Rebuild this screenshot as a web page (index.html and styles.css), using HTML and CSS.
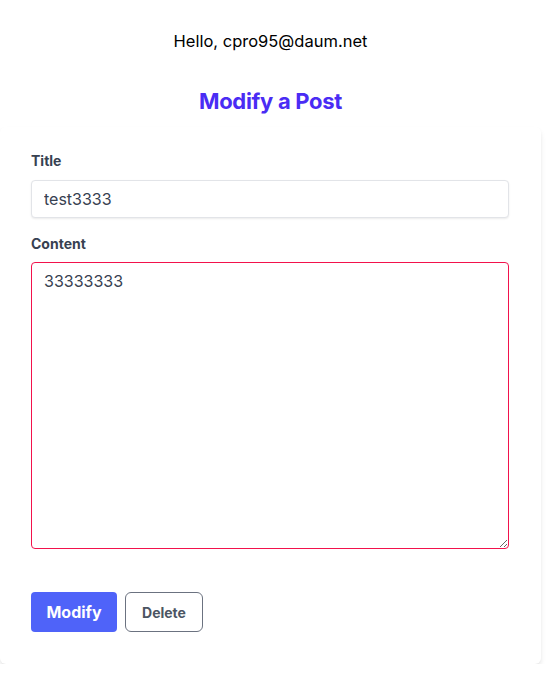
FILE: index.html
```html
<!DOCTYPE html>
<html>
<head>
<meta charset="utf-8">
<link rel="stylesheet" href="styles.css">
</head>
<body>
<div class="page">
  <p class="hello">Hello, cpro95@daum.net</p>
  <h1 class="heading">Modify a Post</h1>
  <form class="card">
    <label class="label" for="title">Title</label>
    <input id="title" class="input" type="text" value="test3333">
    <label class="label label-content" for="content">Content</label>
    <textarea id="content" class="textarea">33333333</textarea>
    <div class="actions">
      <button type="button" class="btn btn-primary">Modify</button>
      <button type="button" class="btn btn-outline">Delete</button>
    </div>
  </form>
</div>
</body>
</html>
```
FILE: styles.css
```css
html, body {
  margin: 0;
  padding: 0;
  background: #ffffff;
}
body {
  font-family: Inter, "Noto Sans", sans-serif;
  color: #000;
}
.page {
  width: 541px;
  display: flex;
  flex-direction: column;
}
.hello {
  margin: 31px 0 0;
  font-size: 16.5px;
  line-height: 20px;
  text-align: center;
  color: #000;
}
.heading {
  margin: 36px 0 0;
  font-size: 22px;
  line-height: 28px;
  font-weight: 700;
  text-align: center;
  color: #4a2cf4;
  letter-spacing: -0.3px;
}
.card {
  margin-top: 12px;
  background: #fff;
  border-radius: 6px;
  box-shadow: 0 4px 6px -1px rgba(0,0,0,0.1), 0 2px 4px -1px rgba(0,0,0,0.06);
  padding: 24px 32px 32px 31px;
  display: flex;
  flex-direction: column;
}
.label {
  font-size: 14px;
  line-height: 20px;
  font-weight: 700;
  color: #374151;
  margin-bottom: 9px;
}
.label-content {
  margin-top: 16px;
  margin-bottom: 8px;
}
.input {
  box-sizing: border-box;
  height: 38px;
  width: 100%;
  border: 1px solid #e2e4e8;
  border-radius: 4px;
  box-shadow: 0 1px 2px rgba(0,0,0,0.08);
  padding: 0 12px;
  font-family: inherit;
  font-size: 16px;
  color: #374151;
  outline: none;
}
.textarea {
  box-sizing: border-box;
  height: 287px;
  width: 100%;
  border: 1px solid #f2124c;
  border-radius: 4px;
  padding: 6px 12px;
  font-family: inherit;
  font-size: 16px;
  line-height: 24px;
  color: #374151;
  outline: none;
  margin: 0;
}
.actions {
  margin-top: 43px;
  display: flex;
  gap: 8px;
}
.btn {
  box-sizing: border-box;
  height: 40px;
  border-radius: 4px;
  font-family: inherit;
  font-weight: 700;
  cursor: pointer;
}
.btn-primary {
  width: 86px;
  background: #4f63f9;
  color: #fff;
  border: none;
  font-size: 16px;
}
.btn-outline {
  width: 78px;
  background: #fff;
  color: #4b5563;
  border: 1px solid #6b7280;
  border-radius: 6px;
  font-size: 14px;
}
```
